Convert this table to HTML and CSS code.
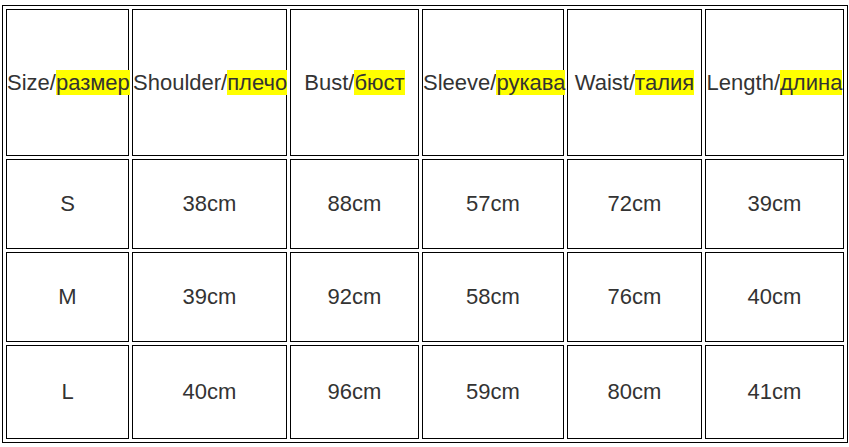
FILE: index.html
```html
<!DOCTYPE html>
<html lang="en">
<head>
<meta charset="utf-8">
<title>Size chart</title>
<link rel="stylesheet" href="styles.css">
</head>
<body>
<table class="size-chart">
  <colgroup>
    <col class="c1"><col class="c2"><col class="c3"><col class="c4"><col class="c5"><col class="c6">
  </colgroup>
  <tr class="row-head">
    <td>Size/<span class="hl">размер</span></td>
    <td>Shoulder/<span class="hl">плечо</span></td>
    <td>Bust/<span class="hl">бюст</span></td>
    <td>Sleeve/<span class="hl">рукава</span></td>
    <td>Waist/<span class="hl">талия</span></td>
    <td>Length/<span class="hl">длина</span></td>
  </tr>
  <tr class="row-s">
    <td>S</td><td>38cm</td><td>88cm</td><td>57cm</td><td>72cm</td><td>39cm</td>
  </tr>
  <tr class="row-m">
    <td>M</td><td>39cm</td><td>92cm</td><td>58cm</td><td>76cm</td><td>40cm</td>
  </tr>
  <tr class="row-l">
    <td>L</td><td>40cm</td><td>96cm</td><td>59cm</td><td>80cm</td><td>41cm</td>
  </tr>
</table>
</body>
</html>
```

FILE: styles.css
```css
html, body {
  margin: 0;
  padding: 0;
  background: #ffffff;
}

.size-chart {
  margin: 5px 0 0 2px;
  border: 1px solid #000000;
  border-spacing: 3px;
  table-layout: fixed;
  width: 846px;
  font-family: "Liberation Sans", Arial, sans-serif;
  font-size: 22px;
  color: #333333;
}

.size-chart td {
  border: 1px solid #000000;
  padding: 0;
  text-align: center;
  vertical-align: middle;
  white-space: nowrap;
  box-sizing: border-box;
}

.c1 { width: 123px; }
.c2 { width: 155px; }
.c3 { width: 129px; }
.c4 { width: 142px; }
.c5 { width: 135px; }
.c6 { width: 139px; }

.row-head td { height: 147px; }
.row-s td { height: 90px; }
.row-m td { height: 90px; }
.row-l td { height: 94px; }

.hl {
  background: #ffff00;
}
```
